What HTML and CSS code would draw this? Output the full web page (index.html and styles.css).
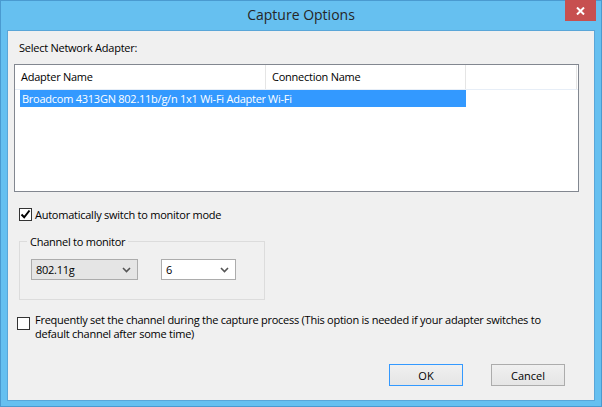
FILE: index.html
```html
<!DOCTYPE html>
<html lang="en">
<head>
  <meta charset="UTF-8" />
  <title>Capture Options</title>
  <link rel="stylesheet" href="styles.css">
</head>
<body>

  <div class="window">
    <div class="titlebar">
      <span></span>
      <div class="title">Capture Options</div>
      <button class="close">
        <svg width="9" height="8" viewBox="0 0 9 8"><path d="M1 0.5 L8 7.5 M8 0.5 L1 7.5" stroke="#fff" stroke-width="2"/></svg>
      </button>
    </div>

    <div class="client">
      <div class="caption">Select Network Adapter:</div>

      <div class="listbox">
        <div class="list-head">
          <div class="col col-name">Adapter Name</div>
          <div class="col col-conn">Connection Name</div>
          <div class="col col-rest"></div>
        </div>
        <div class="list-row selected">
          <div class="col col-name">Broadcom 4313GN 802.11b/g/n 1x1 Wi-Fi Adapter</div>
          <div class="col col-conn">Wi-Fi</div>
        </div>
      </div>

      <div class="check-row monitor">
        <span class="box checked">
          <svg width="11" height="11" viewBox="0 0 11 11"><path d="M1.5 5.5 L4.2 8.3 L9.5 1.5" fill="none" stroke="#000" stroke-width="2"/></svg>
        </span>
        <span>Automatically switch to monitor mode</span>
      </div>

      <fieldset class="group">
        <legend>Channel to monitor</legend>
        <div class="selects">
          <div class="select band">
            <span>802.11g</span>
            <svg width="9" height="6" viewBox="0 0 9 6"><path d="M1 1 L4.5 4.5 L8 1" fill="none" stroke="#555" stroke-width="1.6"/></svg>
          </div>
          <div class="select channel">
            <span>6</span>
            <svg width="9" height="6" viewBox="0 0 9 6"><path d="M1 1 L4.5 4.5 L8 1" fill="none" stroke="#555" stroke-width="1.6"/></svg>
          </div>
        </div>
      </fieldset>

      <div class="check-row frequent">
        <span class="box"></span>
        <span>Frequently set the channel during the capture process (This option is needed if your adapter switches to<br>default channel after some time)</span>
      </div>

      <div class="buttons">
        <button class="btn default">OK</button>
        <button class="btn">Cancel</button>
      </div>
    </div>
  </div>

</body>
</html>
```

FILE: styles.css
```css
* {
  margin: 0;
  padding: 0;
  box-sizing: border-box;
}

body {
  font-family: 'Open Sans', 'Noto Sans', sans-serif;
  font-size: 11px;
  letter-spacing: -0.25px;
  color: #000;
  background: #fff;
}

.window {
  width: 602px;
  height: 407px;
  border: 1px solid #4a9ad0;
  background: #66c0f0;
  padding: 0 6px 5px 6px;
  display: flex;
  flex-direction: column;
}

.titlebar {
  height: 29px;
  display: grid;
  grid-template-columns: 1fr auto 1fr;
}

.title {
  font-size: 14px;
  letter-spacing: 0;
  color: #262626;
  line-height: 28px;
  text-align: center;
}

.close {
  justify-self: end;
  align-self: start;
  width: 31px;
  height: 21px;
  margin-top: -1px;
  margin-right: -1px;
  border: none;
  background: #c75050;
  display: flex;
  align-items: center;
  justify-content: center;
}

.client {
  flex: 1;
  border: 1px solid #5aa6d8;
  background: #f0f0f0;
  padding: 9px 15px 0 6px;
}

.caption {
  line-height: 15px;
  margin-left: 5px;
}

.listbox {
  margin-top: 9px;
  height: 128px;
  border: 1px solid #828790;
  background: #fff;
}

.list-head {
  display: flex;
  height: 25px;
  border-bottom: 1px solid #e7eef7;
}

.list-head .col {
  line-height: 24px;
  border-right: 1px solid #e5e5e5;
  padding-left: 6px;
}

.col-name {
  width: 251px;
}

.col-conn {
  width: 200px;
}

.col-rest {
  width: 111px;
}

.list-row {
  display: flex;
  height: 17px;
  margin-left: 5px;
  width: 446px;
}

.list-row .col {
  line-height: 17px;
  padding-left: 2px;
  white-space: nowrap;
  overflow: hidden;
}

.list-row .col-name {
  width: 246px;
}

.list-row.selected {
  background: #3399ff;
  color: #fff;
}

.check-row {
  display: flex;
  align-items: center;
  gap: 3px;
}

.check-row.monitor {
  margin-top: 15px;
  margin-left: 5px;
}

.check-row.frequent {
  margin-top: 13px;
  margin-left: 3px;
  align-items: flex-start;
  line-height: 14px;
}

.check-row.frequent .box {
  margin-top: 4px;
  margin-right: 2px;
}

.box {
  width: 13px;
  height: 13px;
  border: 1px solid #333;
  background: #fff;
  flex-shrink: 0;
  display: flex;
  align-items: center;
  justify-content: center;
}

.group {
  margin-top: 12px;
  margin-left: 5px;
  width: 246px;
  height: 66px;
  border: 1px solid #dcdcdc;
  padding: 0 11px;
}

.group legend {
  margin-left: -4px;
  padding: 0 3px;
  line-height: 15px;
}

.selects {
  display: flex;
  gap: 23px;
  margin-top: 10px;
}

.select {
  height: 21px;
  border: 1px solid #acacac;
  display: flex;
  align-items: center;
  justify-content: space-between;
  padding: 0 6px 0 4px;
}

.select.band {
  width: 107px;
  background: #e5e5e5;
}

.select.channel {
  width: 75px;
  background: #fff;
}

.buttons {
  display: flex;
  justify-content: flex-end;
  gap: 28px;
  margin-top: 23px;
  margin-right: 14px;
}

.btn {
  width: 74px;
  height: 22px;
  font-family: inherit;
  font-size: 11px;
  color: #000;
  border: 1px solid #acacac;
  background: linear-gradient(#f0f0f0, #e5e5e5);
}

.btn.default {
  border-color: #3399ff;
}
```
